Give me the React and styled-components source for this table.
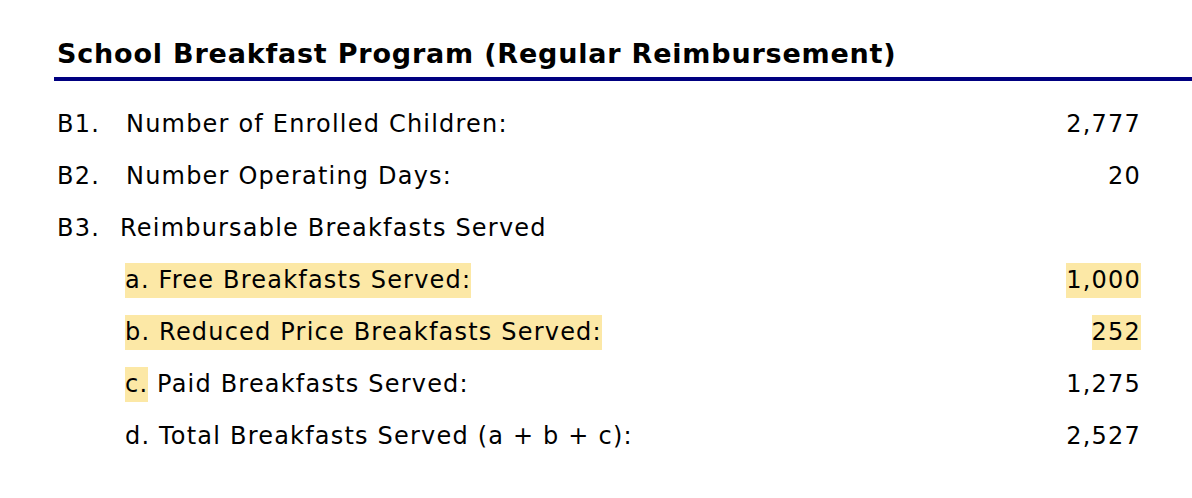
import React from 'react';
import styled, { createGlobalStyle } from 'styled-components';

const GlobalStyle = createGlobalStyle`
  body {
    margin: 0;
    background: #ffffff;
    font-family: "DejaVu Sans", Verdana, sans-serif;
    color: #000000;
  }
`;

const Page = styled.div`
  width: 1192px;
  height: 498px;
  padding-top: 37px;
  box-sizing: border-box;
  overflow: hidden;
`;

const Title = styled.h2`
  margin: 0 0 0 54px;
  padding: 0 0 6px 3px;
  font-size: 27px;
  font-weight: 700;
  letter-spacing: 0.8px;
  line-height: 34px;
  border-bottom: 4px solid #000080;
`;

const List = styled.div`
  display: flex;
  flex-direction: column;
  gap: 17px;
  padding: 26px 52px 0 57px;
`;

const Row = styled.div`
  display: flex;
  align-items: center;
  justify-content: space-between;
  height: 35px;
  font-size: 24px;
  letter-spacing: 1.2px;
  line-height: 35px;
`;

const Label = styled.div`
  display: flex;
  align-items: center;
  padding-left: ${p => (p.$sub ? '68px' : '0')};
`;

const Code = styled.span`
  width: ${p => p.$w}px;
  flex: none;
`;

const Mark = styled.span`
  background: #fce8a6;
`;

const Plain = styled.span`
  white-space: pre;
`;

const Value = styled.span`
  margin-right: -1px;
  background: ${p => (p.$on ? '#fce8a6' : 'transparent')};
`;

const rows = [
  { code: 'B1.', text: 'Number of Enrolled Children:', value: '2,777', w: 69 },
  { code: 'B2.', text: 'Number Operating Days:', value: '20', w: 69 },
  { code: 'B3.', text: 'Reimbursable Breakfasts Served', value: '', w: 63 },
  { sub: true, mark: 'a. Free Breakfasts Served:', value: '1,000', hl: true },
  { sub: true, mark: 'b. Reduced Price Breakfasts Served:', value: '252', hl: true },
  { sub: true, mark: 'c.', text: ' Paid Breakfasts Served:', value: '1,275' },
  { sub: true, text: 'd. Total Breakfasts Served (a + b + c):', value: '2,527' },
];

export default function App() {
  return (
    <Page>
      <GlobalStyle />
      <Title>School Breakfast Program (Regular Reimbursement)</Title>
      <List>
        {rows.map((r, i) => (
          <Row key={i}>
            <Label $sub={r.sub}>
              {r.code && <Code $w={r.w}>{r.code}</Code>}
              {r.mark && <Mark>{r.mark}</Mark>}
              {r.text && <Plain>{r.text}</Plain>}
            </Label>
            <Value $on={r.hl}>{r.value}</Value>
          </Row>
        ))}
      </List>
    </Page>
  );
}
